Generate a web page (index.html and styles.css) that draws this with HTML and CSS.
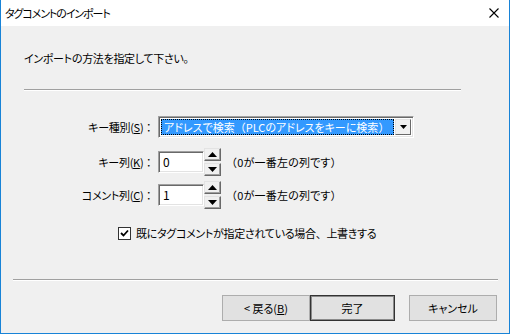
FILE: index.html
```html
<!DOCTYPE html>
<html lang="ja">
<head>
    <meta charset="UTF-8">
    <title>タグコメントのインポート</title>
    <link rel="stylesheet" href="styles.css">
</head>
<body>
    <div class="window">
        <!-- タイトルバー -->
        <div class="titlebar">
            <span class="title">タグコメントのインポート</span>
            <svg class="close" width="10" height="10" viewBox="0 0 10 10">
                <path d="M0.5 0.5 L9.5 9.5 M9.5 0.5 L0.5 9.5" stroke="#000" stroke-width="1.1" fill="none"/>
            </svg>
        </div>

        <div class="content">
            <p class="intro">インポートの方法を指定して下さい<span class="fw">。</span></p>
            <div class="etched top-line"></div>

            <div class="form">
                <div class="row row-combo">
                    <label class="label">キー種別(<u>S</u>)<span class="fw">：</span></label>
                    <div class="combo">
                        <div class="combo-value"><span class="focus">アドレスで検索<span class="fw">（</span>PLCのアドレスをキーに検索<span class="fw">）</span></span></div>
                        <div class="combo-btn">
                            <svg width="7" height="4" viewBox="0 0 7 4"><path d="M0 0 H7 L3.5 4 Z" fill="#000"/></svg>
                        </div>
                    </div>
                </div>

                <div class="row row-spin">
                    <label class="label">キー列(<u>K</u>)<span class="fw">：</span></label>
                    <div class="edit">0</div>
                    <div class="spin">
                        <div class="spin-btn"><svg width="9" height="5" viewBox="0 0 9 5"><path d="M0 5 H9 L4.5 0 Z" fill="#000"/></svg></div>
                        <div class="spin-btn"><svg width="9" height="5" viewBox="0 0 9 5"><path d="M0 0 H9 L4.5 5 Z" fill="#000"/></svg></div>
                    </div>
                    <span class="hint"><span class="fw">（</span>0が一番左の列です<span class="fw">）</span></span>
                </div>

                <div class="row row-spin">
                    <label class="label">コメント列(<u>C</u>)<span class="fw">：</span></label>
                    <div class="edit">1</div>
                    <div class="spin">
                        <div class="spin-btn"><svg width="9" height="5" viewBox="0 0 9 5"><path d="M0 5 H9 L4.5 0 Z" fill="#000"/></svg></div>
                        <div class="spin-btn"><svg width="9" height="5" viewBox="0 0 9 5"><path d="M0 0 H9 L4.5 5 Z" fill="#000"/></svg></div>
                    </div>
                    <span class="hint"><span class="fw">（</span>0が一番左の列です<span class="fw">）</span></span>
                </div>

                <div class="check-row">
                    <span class="checkbox">
                        <svg width="9" height="9" viewBox="0 0 9 9"><path d="M1 4 L3.5 6.5 L8 1.5" stroke="#000" stroke-width="1.8" fill="none"/></svg>
                    </span>
                    <span>既にタグコメントが指定されている場合<span class="fw">、</span>上書きする</span>
                </div>
            </div>

            <div class="etched bottom-line"></div>

            <!-- ボタン -->
            <div class="buttons">
                <button class="btn">&lt; 戻る(<u>B</u>)</button>
                <button class="btn default">完了</button>
                <button class="btn cancel">キャンセル</button>
            </div>
        </div>
    </div>
</body>
</html>
```

FILE: styles.css
```css
body {
    margin: 0;
    font-family: "Noto Sans CJK JP", "Noto Sans", sans-serif;
    font-size: 11px;
    font-feature-settings: "palt";
    letter-spacing: -0.3px;
    color: #000;
}
.fw {
    font-feature-settings: "palt" 0;
}
.window {
    width: 510px;
    height: 334px;
    box-sizing: border-box;
    border: 1px solid #1883d7;
    border-top: none;
    display: flex;
    flex-direction: column;
    background: #f0f0f0;
}
.titlebar {
    height: 26px;
    background: #fff;
    display: flex;
    align-items: center;
    justify-content: space-between;
    padding: 0 10px 0 4px;
}
.title {
    line-height: 16px;
    letter-spacing: -1.1px;
}
.content {
    flex: 1;
    display: flex;
    flex-direction: column;
}
.intro {
    margin: 24px 0 0 23px;
    line-height: 16px;
}
.etched {
    height: 1px;
    background: #a0a0a0;
    border-bottom: 1px solid #fff;
}
.top-line {
    margin: 23px 0 0 23px;
    width: 437px;
}
.form {
    height: 188px;
    padding-top: 25px;
    box-sizing: border-box;
}
.row {
    display: flex;
    align-items: center;
}
.label {
    width: 153px;
    text-align: right;
    margin-right: 4px;
    line-height: 16px;
}
.combo {
    width: 256px;
    height: 22px;
    box-sizing: border-box;
    display: flex;
    background: #fff;
    border: 1px solid;
    border-color: #a0a0a0 #fff #fff #a0a0a0;
    box-shadow: inset 1px 1px 0 #696969, inset -1px -1px 0 #e3e3e3;
    padding: 2px;
}
.combo-value {
    flex: 1;
    background: #3399ff;
    color: #fff;
    display: flex;
    align-items: center;
    margin-right: 1px;
    outline: 1px dotted #000;
    outline-offset: -1px;
    overflow: hidden;
}
.focus {
    padding-left: 3px;
    line-height: 16px;
    white-space: nowrap;
    letter-spacing: 0;
}
.combo-btn {
    width: 16px;
    box-sizing: border-box;
    display: flex;
    align-items: center;
    justify-content: center;
    background: #f0f0f0;
    border: 1px solid;
    border-color: #e3e3e3 #696969 #696969 #e3e3e3;
}
.row-spin {
    height: 28px;
    margin-top: 10px;
}
.row-spin + .row-spin {
    margin-top: 5px;
}
.edit {
    width: 46px;
    height: 22px;
    box-sizing: border-box;
    background: #fff;
    border: 1px solid;
    border-color: #a0a0a0 #fff #fff #a0a0a0;
    box-shadow: inset 1px 1px 0 #696969, inset -1px -1px 0 #e3e3e3;
    padding: 2px 4px;
    font-size: 12px;
    line-height: 16px;
}
.spin {
    width: 17px;
    height: 28px;
    display: flex;
    flex-direction: column;
    justify-content: space-between;
    margin-right: 5px;
}
.spin-btn {
    height: 13px;
    box-sizing: border-box;
    display: flex;
    align-items: center;
    justify-content: center;
    background: #f0f0f0;
    border: 1px solid;
    border-color: #e3e3e3 #696969 #696969 #e3e3e3;
    box-shadow: inset -1px -1px 0 #a0a0a0;
}
.hint {
    line-height: 16px;
    letter-spacing: 0.2px;
}
.check-row {
    display: flex;
    align-items: center;
    margin: 16px 0 0 117px;
    line-height: 16px;
}
.checkbox {
    width: 13px;
    height: 13px;
    box-sizing: border-box;
    border: 1px solid #333;
    background: #fff;
    display: flex;
    align-items: center;
    justify-content: center;
    margin-right: 5px;
}
.bottom-line {
    margin: 0 11px 0 12px;
}
.buttons {
    display: flex;
    justify-content: flex-end;
    margin-top: 14px;
    padding-right: 12px;
}
.btn {
    font: inherit;
    width: 88px;
    height: 26px;
    padding: 0;
    background: #e1e1e1;
    border: 1px solid #adadad;
    color: #000;
    line-height: 16px;
}
.btn.default {
    width: 85px;
    border: 1px solid #333;
    box-shadow: inset 0 0 0 1px #8a8a8a;
}
.btn.cancel {
    margin-left: 14px;
}
```
